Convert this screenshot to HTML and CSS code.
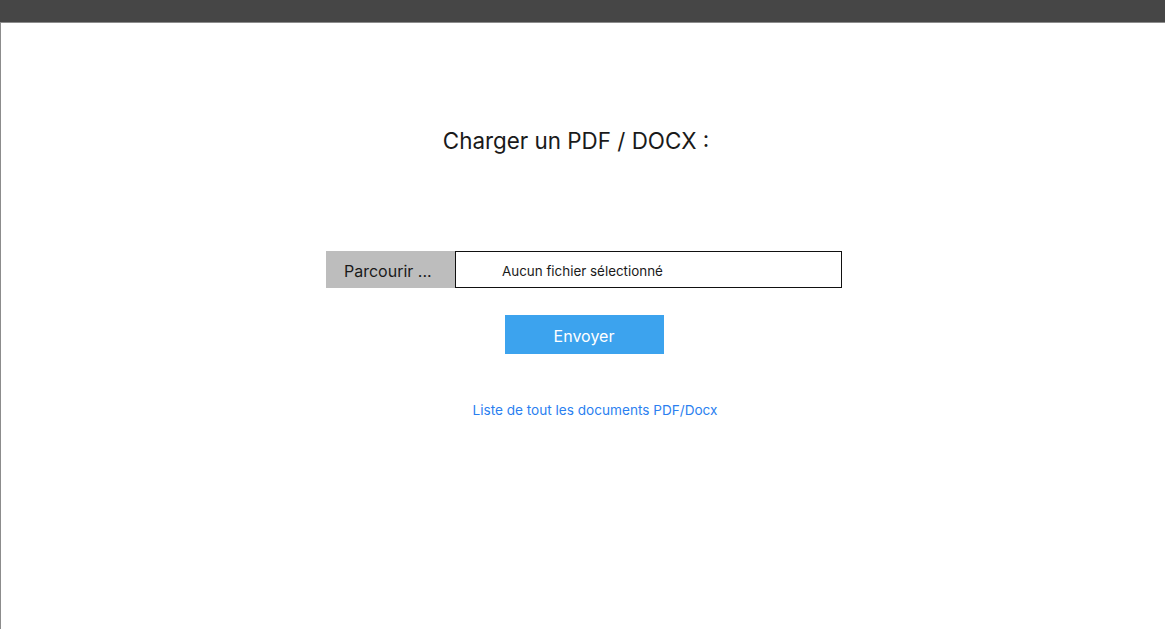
FILE: index.html
```html
<!DOCTYPE html>
<html lang="fr">
<head>
<meta charset="utf-8">
<title>Charger un PDF / DOCX</title>
<link rel="stylesheet" href="styles.css">
</head>
<body>
<header class="topbar"></header>
<main class="page">
  <h1 class="title">Charger un PDF / DOCX :</h1>
  <form class="upload">
    <div class="file-row">
      <span class="browse">Parcourir ...</span>
      <span class="file-name">Aucun fichier sélectionné</span>
    </div>
    <button type="button" class="send">Envoyer</button>
  </form>
  <a class="list-link" href="#">Liste de tout les documents PDF/Docx</a>
</main>
</body>
</html>
```
FILE: styles.css
```css
html, body {
  margin: 0;
  padding: 0;
  height: 100%;
  background: #ffffff;
  font-family: Inter, "Noto Sans", "Liberation Sans", sans-serif;
}
body {
  display: flex;
  flex-direction: column;
}
.topbar {
  height: 22px;
  background: #464646;
  border-bottom: 1px solid #8c8c8c;
  flex: none;
}
.page {
  flex: 1;
  border-left: 1px solid #8c8c8c;
  display: flex;
  flex-direction: column;
  align-items: center;
}
.title {
  margin: 105px 0 0 0;
  padding-right: 14px;
  font-size: 22.4px;
  line-height: 26px;
  font-weight: 400;
  color: #1a1a1a;
}
.upload {
  margin-top: 97px;
  display: flex;
  flex-direction: column;
  align-items: center;
  padding-left: 2px;
}
.file-row {
  display: flex;
  height: 37px;
}
.browse {
  width: 129px;
  background: #bdbdbd;
  color: #1a1a1a;
  font-size: 16px;
  display: flex;
  align-items: center;
  padding: 2px 0 0 18px;
  box-sizing: border-box;
}
.file-name {
  width: 387px;
  box-sizing: border-box;
  border: 1px solid #111111;
  background: #fff;
  color: #1a1a1a;
  font-size: 13.4px;
  display: flex;
  align-items: center;
  padding: 2px 0 0 46px;
}
.send {
  margin-top: 27px;
  width: 159px;
  height: 39px;
  border: none;
  background: #3ca3ee;
  color: #ffffff;
  font-family: inherit;
  font-size: 16px;
  padding: 2px 0 0 0;
}
.list-link {
  margin-top: 48px;
  padding-left: 24px;
  font-size: 13.6px;
  line-height: 16px;
  color: #2b7ff0;
  text-decoration: none;
}
```
